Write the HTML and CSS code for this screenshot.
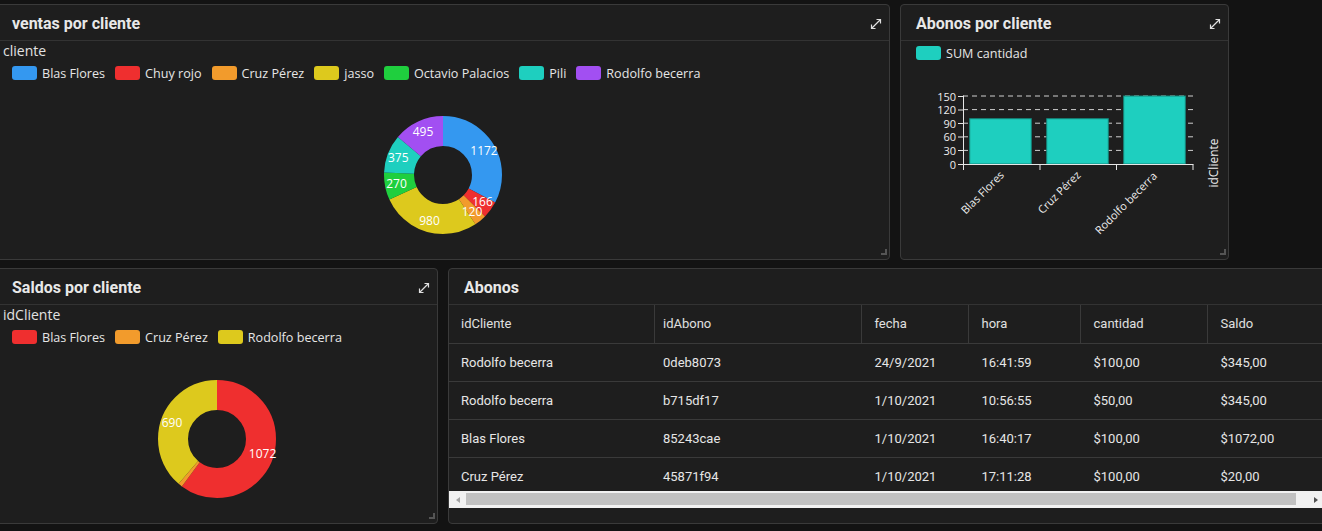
FILE: index.html
```html
<!DOCTYPE html>
<html lang="es">
<head>
<meta charset="utf-8">
<title>Dashboard</title>
<link rel="stylesheet" href="styles.css">
</head>
<body>
<div class="dash">
  <div class="row">
    <section class="panel p-wide">
      <header class="panel-head">
        <h2>ventas por cliente</h2>
        <svg class="expand" width="12" height="12" viewBox="0 0 12 12"><path d="M1.5 10.5L10.5 1.5M1.5 6.5V10.5H5.5M6.5 1.5H10.5V5.5"/></svg>
      </header>
      <div class="legend-title">cliente</div>
      <ul class="legend">
        <li><span class="sw c-blue"></span>Blas Flores</li>
        <li><span class="sw c-red"></span>Chuy rojo</li>
        <li><span class="sw c-orange"></span>Cruz Pérez</li>
        <li><span class="sw c-yellow"></span>jasso</li>
        <li><span class="sw c-green"></span>Octavio Palacios</li>
        <li><span class="sw c-teal"></span>Pili</li>
        <li><span class="sw c-purple"></span>Rodolfo becerra</li>
      </ul>
      <div class="chart">
        <svg class="donut" width="130" height="130" viewBox="0 0 130 130">
          <g transform="rotate(-90 65 65)">
            <circle cx="65" cy="65" r="44" pathLength="3578" class="seg s-blue" stroke-dasharray="1172 3578" stroke-dashoffset="0"/>
            <circle cx="65" cy="65" r="44" pathLength="3578" class="seg s-red" stroke-dasharray="166 3578" stroke-dashoffset="-1172"/>
            <circle cx="65" cy="65" r="44" pathLength="3578" class="seg s-orange" stroke-dasharray="120 3578" stroke-dashoffset="-1338"/>
            <circle cx="65" cy="65" r="44" pathLength="3578" class="seg s-yellow" stroke-dasharray="980 3578" stroke-dashoffset="-1458"/>
            <circle cx="65" cy="65" r="44" pathLength="3578" class="seg s-green" stroke-dasharray="270 3578" stroke-dashoffset="-2438"/>
            <circle cx="65" cy="65" r="44" pathLength="3578" class="seg s-teal" stroke-dasharray="375 3578" stroke-dashoffset="-2708"/>
            <circle cx="65" cy="65" r="44" pathLength="3578" class="seg s-purple" stroke-dasharray="495 3578" stroke-dashoffset="-3083"/>
          </g>
          <text x="106" y="40">1172</text>
          <text x="104.5" y="91.5">166</text>
          <text x="94" y="101">120</text>
          <text x="51.5" y="110">980</text>
          <text x="18.5" y="73">270</text>
          <text x="20.3" y="47">375</text>
          <text x="45" y="21">495</text>
        </svg>
      </div>
      <span class="grip"></span>
    </section>

    <section class="panel p-narrow">
      <header class="panel-head">
        <h2>Abonos por cliente</h2>
        <svg class="expand" width="12" height="12" viewBox="0 0 12 12"><path d="M1.5 10.5L10.5 1.5M1.5 6.5V10.5H5.5M6.5 1.5H10.5V5.5"/></svg>
      </header>
      <ul class="legend">
        <li><span class="sw c-teal"></span>SUM cantidad</li>
      </ul>
      <svg class="bars" width="327" height="180" viewBox="0 0 327 180">
        <g class="grid">
          <line x1="62" y1="31" x2="292" y2="31"/>
          <line x1="62" y1="44.6" x2="292" y2="44.6"/>
          <line x1="62" y1="58.2" x2="292" y2="58.2"/>
          <line x1="62" y1="71.8" x2="292" y2="71.8"/>
          <line x1="62" y1="85.4" x2="292" y2="85.4"/>
        </g>
        <rect class="bar" x="68.7" y="53.7" width="61.6" height="45.3"/>
        <rect class="bar" x="145.7" y="53.7" width="61.6" height="45.3"/>
        <rect class="bar" x="222.7" y="31" width="61.6" height="68"/>
        <g class="axis">
          <line x1="62.5" y1="30.5" x2="62.5" y2="99.5"/>
          <line x1="62" y1="99.5" x2="292.5" y2="99.5"/>
          <line x1="57" y1="31.5" x2="62" y2="31.5"/>
          <line x1="57" y1="45" x2="62" y2="45"/>
          <line x1="57" y1="58.5" x2="62" y2="58.5"/>
          <line x1="57" y1="72" x2="62" y2="72"/>
          <line x1="57" y1="85.5" x2="62" y2="85.5"/>
          <line x1="57" y1="99.5" x2="62" y2="99.5"/>
          <line x1="62.5" y1="99.5" x2="62.5" y2="105"/>
          <line x1="139" y1="99.5" x2="139" y2="105"/>
          <line x1="215.5" y1="99.5" x2="215.5" y2="105"/>
          <line x1="292" y1="99.5" x2="292" y2="105"/>
        </g>
        <g class="ticks">
          <text x="55" y="31">150</text>
          <text x="55" y="44.6">120</text>
          <text x="55" y="58.2">90</text>
          <text x="55" y="71.8">60</text>
          <text x="55" y="85.4">30</text>
          <text x="55" y="99">0</text>
        </g>
        <g class="xlabels">
          <text x="97" y="104" transform="rotate(-45 97 104)">Blas Flores</text>
          <text x="173.5" y="104" transform="rotate(-45 173.5 104)">Cruz Pérez</text>
          <text x="250" y="105" transform="rotate(-45 250 105)">Rodolfo becerra</text>
        </g>
        <text class="ytitle" x="312" y="98" transform="rotate(-90 312 98)">idCliente</text>
      </svg>
      <span class="grip"></span>
    </section>
  </div>

  <div class="row">
    <section class="panel p-half">
      <header class="panel-head">
        <h2>Saldos por cliente</h2>
        <svg class="expand" width="12" height="12" viewBox="0 0 12 12"><path d="M1.5 10.5L10.5 1.5M1.5 6.5V10.5H5.5M6.5 1.5H10.5V5.5"/></svg>
      </header>
      <div class="legend-title">idCliente</div>
      <ul class="legend">
        <li><span class="sw c-red"></span>Blas Flores</li>
        <li><span class="sw c-orange"></span>Cruz Pérez</li>
        <li><span class="sw c-yellow"></span>Rodolfo becerra</li>
      </ul>
      <div class="chart">
        <svg class="donut" width="130" height="130" viewBox="0 0 130 130">
          <g transform="rotate(-90 65 65)">
            <circle cx="65" cy="65" r="44" pathLength="1782" class="seg s-red" stroke-dasharray="1072 1782" stroke-dashoffset="0"/>
            <circle cx="65" cy="65" r="44" pathLength="1782" class="seg s-orange" stroke-dasharray="20 1782" stroke-dashoffset="-1072"/>
            <circle cx="65" cy="65" r="44" pathLength="1782" class="seg s-yellow" stroke-dasharray="690 1782" stroke-dashoffset="-1092"/>
          </g>
          <text x="110.6" y="79.5">1072</text>
          <text x="20" y="48">690</text>
        </svg>
      </div>
      <span class="grip"></span>
    </section>

    <section class="panel p-wide">
      <header class="panel-head">
        <h2>Abonos</h2>
        <svg class="expand" width="12" height="12" viewBox="0 0 12 12"><path d="M1.5 10.5L10.5 1.5M1.5 6.5V10.5H5.5M6.5 1.5H10.5V5.5"/></svg>
      </header>
      <div class="table-view" role="table">
        <div class="trow thead" role="row">
          <div class="cell" role="columnheader">idCliente</div>
          <div class="cell" role="columnheader">idAbono</div>
          <div class="cell" role="columnheader">fecha</div>
          <div class="cell" role="columnheader">hora</div>
          <div class="cell" role="columnheader">cantidad</div>
          <div class="cell" role="columnheader">Saldo</div>
        </div>
        <div class="trow" role="row">
          <div class="cell">Rodolfo becerra</div>
          <div class="cell">0deb8073</div>
          <div class="cell">24/9/2021</div>
          <div class="cell">16:41:59</div>
          <div class="cell">$100,00</div>
          <div class="cell">$345,00</div>
        </div>
        <div class="trow" role="row">
          <div class="cell">Rodolfo becerra</div>
          <div class="cell">b715df17</div>
          <div class="cell">1/10/2021</div>
          <div class="cell">10:56:55</div>
          <div class="cell">$50,00</div>
          <div class="cell">$345,00</div>
        </div>
        <div class="trow" role="row">
          <div class="cell">Blas Flores</div>
          <div class="cell">85243cae</div>
          <div class="cell">1/10/2021</div>
          <div class="cell">16:40:17</div>
          <div class="cell">$100,00</div>
          <div class="cell">$1072,00</div>
        </div>
        <div class="trow" role="row">
          <div class="cell">Cruz Pérez</div>
          <div class="cell">45871f94</div>
          <div class="cell">1/10/2021</div>
          <div class="cell">17:11:28</div>
          <div class="cell">$100,00</div>
          <div class="cell">$20,00</div>
        </div>
      </div>
      <div class="hscroll">
        <span class="sb-btn"><span class="tri-left"></span></span>
        <span class="sb-thumb"></span>
        <span class="sb-btn"><span class="tri-right"></span></span>
      </div>
      <span class="grip"></span>
    </section>
  </div>
</div>
</body>
</html>
```

FILE: styles.css
```css
* { box-sizing: border-box; }

html, body {
  margin: 0;
  padding: 0;
  width: 1322px;
  height: 531px;
  overflow: hidden;
  background: #131313;
}

.dash {
  margin-left: -4px;
  padding-top: 4px;
  display: flex;
  flex-direction: column;
  gap: 8px;
}

.row {
  display: flex;
  gap: 10px;
}

.panel {
  position: relative;
  flex: none;
  height: 256px;
  background: #1e1e1e;
  border: 1px solid #3a3a3a;
  border-radius: 4px;
}

.p-wide { width: 894px; }
.p-narrow { width: 329px; }
.p-half { width: 442px; }

.panel-head {
  height: 36px;
  border-bottom: 1px solid #333;
  display: flex;
  align-items: center;
  justify-content: space-between;
  padding: 2px 7px 0 15px;
}

.panel-head h2 {
  margin: 0;
  font: 700 16px Roboto, "Liberation Sans", sans-serif;
  color: #e8e8e8;
}

.expand path {
  fill: none;
  stroke: #e0e0e0;
  stroke-width: 1.2;
}

.legend-title {
  height: 20px;
  line-height: 20px;
  padding-left: 6px;
  font: 14px "Open Sans", sans-serif;
  color: #e2e2e2;
}

.legend {
  list-style: none;
  margin: 0;
  padding: 0 0 0 15px;
  height: 24px;
  display: flex;
  align-items: center;
  gap: 10px;
  font: 12.6px "Open Sans", sans-serif;
  color: #e6e6e6;
}

.legend li {
  display: flex;
  align-items: center;
  white-space: nowrap;
}

.sw {
  width: 25px;
  height: 14px;
  border-radius: 3px;
  margin-right: 5px;
}

.c-blue { background: #3498f0; }
.c-red { background: #ef2f2f; }
.c-orange { background: #f29b2c; }
.c-yellow { background: #ddc91d; }
.c-green { background: #1fcf3e; }
.c-teal { background: #1ecfbf; }
.c-purple { background: #a24ff2; }

.chart {
  display: flex;
  justify-content: center;
  padding-top: 25px;
}

.seg {
  fill: none;
  stroke-width: 30;
}
.s-blue { stroke: #3498f0; }
.s-red { stroke: #ef2f2f; }
.s-orange { stroke: #f29b2c; }
.s-yellow { stroke: #ddc91d; }
.s-green { stroke: #1fcf3e; }
.s-teal { stroke: #1ecfbf; }
.s-purple { stroke: #a24ff2; }

.donut text {
  font: 12px "Open Sans", sans-serif;
  fill: #ffffff;
  text-anchor: middle;
  dominant-baseline: central;
}

.bars { display: block; }

.bars .grid line {
  stroke: #cfcfcf;
  stroke-width: 1;
  stroke-dasharray: 5 4;
}

.bars .bar {
  fill: #1ecfbf;
  stroke: #15857b;
  stroke-width: 1;
}

.bars .axis line {
  stroke: #e6e6e6;
  stroke-width: 1;
}

.bars text {
  font: 11px "Open Sans", sans-serif;
  fill: #ececec;
}

.bars .ticks text {
  text-anchor: end;
  dominant-baseline: central;
}

.bars .xlabels text {
  text-anchor: end;
  dominant-baseline: hanging;
}

.bars .ytitle {
  font-size: 12px;
  text-anchor: middle;
  dominant-baseline: central;
}

.grip {
  position: absolute;
  right: 2px;
  bottom: 4px;
  width: 6px;
  height: 6px;
  border-right: 2px solid #555;
  border-bottom: 2px solid #555;
}

.table-view {
  width: 875px;
  height: 186px;
  overflow: hidden;
  font: 13px Roboto, "Liberation Sans", sans-serif;
  color: #e6e6e6;
}

.trow {
  display: grid;
  grid-template-columns: 206px 207px 107px 112px 127px 127px;
  height: 38px;
  border-bottom: 1px solid #3a3a3a;
}

.trow.thead {
  height: 39px;
}

.cell {
  display: flex;
  align-items: center;
  padding-left: 12px;
  padding-bottom: 1px;
  white-space: nowrap;
}

.cell:nth-child(2) { padding-left: 8px; }
.cell:nth-child(n+3) { padding-left: 12.5px; }

.thead .cell {
  border-right: 1px solid #3a3a3a;
  color: #e0e0e0;
}
.thead .cell:last-child { border-right: none; }

.hscroll {
  width: 875px;
  height: 17px;
  display: flex;
  background: #f1f1f1;
}

.sb-btn {
  width: 17px;
  flex: none;
  display: flex;
  align-items: center;
  justify-content: center;
}

.sb-thumb {
  flex: 1;
  margin: 2px 11px 3px 0;
  background: #c1c1c1;
}

.tri-left {
  width: 0;
  height: 0;
  border-top: 3.5px solid transparent;
  border-bottom: 3.5px solid transparent;
  border-right: 4px solid #a3a3a3;
}

.tri-right {
  width: 0;
  height: 0;
  border-top: 3.5px solid transparent;
  border-bottom: 3.5px solid transparent;
  border-left: 4px solid #505050;
}
```
